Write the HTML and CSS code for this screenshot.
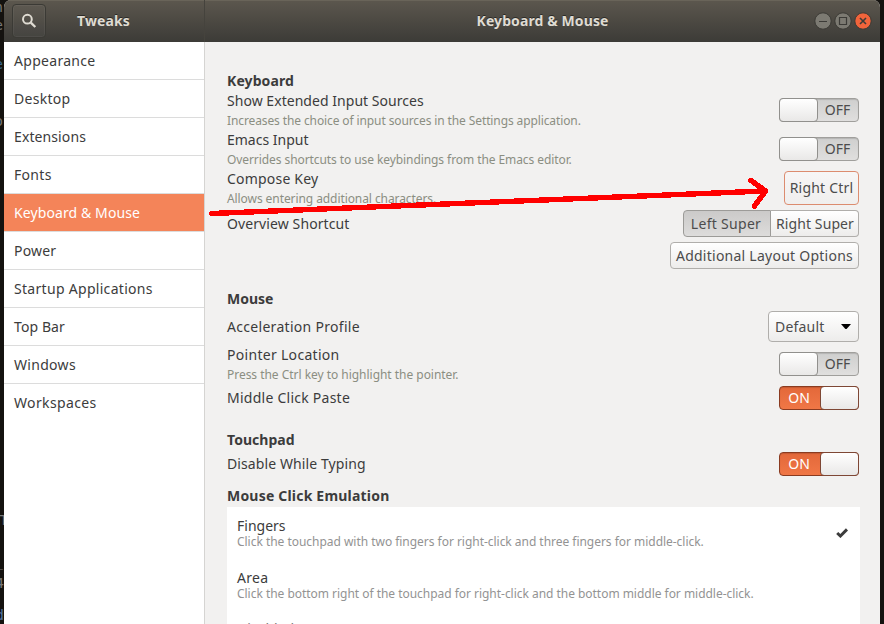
FILE: index.html
```html
<!DOCTYPE html>
<html lang="en">
<head>
<meta charset="utf-8">
<title>Tweaks</title>
<link rel="stylesheet" href="styles.css">
</head>
<body>
<div class="backdrop" aria-hidden="true">
  <span class="frag f1">n</span><span class="frag f2">e</span><span class="frag f3">e</span><span class="frag f4">o</span>
  <span class="frag f5">T</span><span class="frag f6">_</span><span class="frag f7">4</span><span class="frag f8">d</span>
</div>
<div class="window">
  <header class="titlebar">
    <div class="side-head">
      <button class="search" aria-label="Search"><svg width="16" height="16" viewBox="0 0 16 16"><circle cx="6.4" cy="6.2" r="4.4" fill="none" stroke="#dfdbd2" stroke-width="2"/><path d="M9.8 9.6 14.3 14" stroke="#dfdbd2" stroke-width="2.4"/></svg></button>
      <h1 class="app-name t1">Tweaks</h1>
    </div>
    <div class="main-head">
      <h1 class="page-name t1">Keyboard &amp; Mouse</h1>
      <div class="controls">
        <svg width="18" height="18" viewBox="0 0 18 18"><circle class="ctl" cx="9" cy="9" r="8.2"/><path class="glyph" d="M5 9.5h8"/></svg>
        <svg width="18" height="18" viewBox="0 0 18 18"><circle class="ctl" cx="9" cy="9" r="8.2"/><path class="glyph" d="M5.5 5.5h7v7h-7z"/></svg>
        <svg width="18" height="18" viewBox="0 0 18 18"><circle class="ctl close" cx="9" cy="9" r="8.2"/><path class="glyph x" d="M6 6l6 6M12 6l-6 6"/></svg>
      </div>
    </div>
  </header>
  <div class="body">
    <nav class="sidebar">
      <a class="item t3">Appearance</a>
      <a class="item t3">Desktop</a>
      <a class="item t1">Extensions</a>
      <a class="item t3">Fonts</a>
      <a class="item t1 selected">Keyboard &amp; Mouse</a>
      <a class="item t2">Power</a>
      <a class="item t3">Startup Applications</a>
      <a class="item t1">Top Bar</a>
      <a class="item t3">Windows</a>
      <a class="item t4">Workspaces</a>
    </nav>
    <main class="content">
      <h2 class="heading t1">Keyboard</h2>
      <div class="row tall"><div class="label"><p class="name t0">Show Extended Input Sources</p><p class="desc n3">Increases the choice of input sources in the Settings application.</p></div><div class="switch"><i class="knob"></i><span class="state">OFF</span></div></div>
      <div class="row tall"><div class="label"><p class="name">Emacs Input</p><p class="desc n2">Overrides shortcuts to use keybindings from the Emacs editor.</p></div><div class="switch"><i class="knob"></i><span class="state">OFF</span></div></div>
      <div class="row tall"><div class="label"><p class="name t2">Compose Key</p><p class="desc n2">Allows entering additional characters.</p></div><button class="button compose t2">Right Ctrl</button></div>
      <div class="row overview"><p class="name t1">Overview Shortcut</p><div class="segmented"><button class="button pressed t3">Left Super</button><button class="button last t1">Right Super</button></div></div>
      <div class="row options"><button class="button layout t25">Additional Layout Options</button></div>
      <h2 class="heading mouse">Mouse</h2>
      <div class="row accel"><p class="name t3">Acceleration Profile</p><button class="button combo"><span class="t2">Default</span><svg width="12" height="7" viewBox="0 0 12 7"><path d="M1 1h10L6.8 5.7q-.8.7-1.6 0z"/></svg></button></div>
      <div class="row tall pointer"><div class="label"><p class="name t3">Pointer Location</p><p class="desc n1">Press the Ctrl key to highlight the pointer.</p></div><div class="switch"><i class="knob"></i><span class="state">OFF</span></div></div>
      <div class="row short"><p class="name t25">Middle Click Paste</p><div class="switch on"><span class="state">ON</span><i class="knob"></i></div></div>
      <h2 class="heading touchpad t0">Touchpad</h2>
      <div class="row short"><p class="name t1">Disable While Typing</p><div class="switch on"><span class="state">ON</span><i class="knob"></i></div></div>
      <h2 class="heading emulation t2">Mouse Click Emulation</h2>
      <div class="list">
        <div class="choice"><div><p class="name">Fingers</p><p class="desc n1">Click the touchpad with two fingers for right-click and three fingers for middle-click.</p></div><svg class="check" width="12" height="10" viewBox="0 0 12 10"><path d="M1.2 5 4.4 8 11 1.4" fill="none" stroke="#3c3c3c" stroke-width="3"/></svg></div>
        <div class="choice"><div><p class="name t3">Area</p><p class="desc n1">Click the bottom right of the touchpad for right-click and the bottom middle for middle-click.</p></div></div>
        <div class="choice"><div><p class="name peek">Disabled</p></div></div>
      </div>
    </main>
  </div>
</div>
<svg class="arrow" width="884" height="624" viewBox="0 0 884 624"><path d="M212 213.5 765 191M751 180.5l14.5 10.5-11 15" fill="none" stroke="#f00" stroke-width="5.4" stroke-linecap="round" stroke-linejoin="round" shape-rendering="crispEdges"/></svg>
</body>
</html>
```
FILE: styles.css
```css
* { box-sizing: border-box; }
body, h1, h2, p { margin: 0; }
body {
  position: relative;
  width: 884px;
  height: 624px;
  overflow: hidden;
  padding: 0 4px;
  background: #14120f;
  color: #3c3c3c;
  font: 14px/20px "Noto Sans", "Open Sans", sans-serif;
}
button { font: inherit; color: inherit; margin: 0; padding: 0; }
.backdrop { position: absolute; left: 0; top: 0; width: 4px; height: 624px; overflow: hidden; color: #777; }
.frag { position: absolute; right: 1px; font: 14px/16px "DejaVu Sans Mono", monospace; }
.f1 { top: -1px; } .f2 { top: 17px; } .f3 { top: 56px; color: #39688b; } .f4 { top: 113px; }
.f5 { top: 512px; right: -4px; } .f6 { top: 553px; } .f7 { top: 575px; right: 0; } .f8 { top: 607px; right: 0; color: #5474a0; }
.window { height: 624px; display: flex; flex-direction: column; border-radius: 7px 7px 0 0; overflow: hidden; background: #f2f1f0; }
.titlebar {
  height: 42px;
  flex: none;
  display: flex;
  background: linear-gradient(#5c574e, #3c3b37);
  box-shadow: inset 0 1px #696459;
  color: #dfdbd2;
  text-shadow: 0 -1px #2b2a27;
}
.titlebar h1 { font-size: 14px; line-height: 42px; font-weight: 700; }
.side-head { width: 201px; display: flex; align-items: center; border-right: 1px solid #45433d; padding-left: 8px; }
.search { width: 34px; height: 34px; display: grid; place-items: center; background: #ffffff08; border: 1px solid #3b3a35; border-radius: 4px; box-shadow: inset 0 0 0 1px #ffffff0c; }
.app-name { margin-left: 31px; }
.main-head { flex: 1; display: grid; grid-template-columns: 1fr auto 1fr; align-items: center; }
.page-name { grid-column: 2; }
.controls { display: flex; gap: 2px; justify-content: flex-end; padding-right: 8px; }
.ctl { fill: #7c7a72; stroke: #3b3a35; }
.close { fill: #f1643b; }
.glyph { fill: none; stroke: #3c3b37; stroke-width: 1.2; }
.x { stroke-width: 1.6; }
.body { flex: 1; min-height: 0; display: flex; }
.sidebar { width: 201px; flex: none; background: #fff; border-right: 1px solid #d5d4d2; }
.item { display: block; height: 38px; padding-left: 10px; line-height: 37px; border-bottom: 1px solid #dcdcdc; }
.item:last-child { border: 0; }
.selected { background: #f48459; color: #fff; }
.content { flex: 1; min-width: 0; padding: 29px 21px 0 22px; }
.heading { font-size: 14px; line-height: 20px; font-weight: 700; }
.row { display: flex; align-items: center; justify-content: space-between; }
.tall { height: 39px; }
.tall .switch, .tall .button { margin-bottom: 2px; }
.name { white-space: nowrap; }
.desc { font-size: 12px; line-height: 19px; color: #8b8e82; white-space: nowrap; }
.switch { width: 80px; height: 24px; flex: none; display: flex; border: 1px solid #a09f9c; border-radius: 4px; background: linear-gradient(#cfcfce, #e0dfde); color: #4c4c4c; line-height: 22px; text-align: center; box-shadow: inset 0 1px 1px #0002; }
.state { flex: 1; }
.knob { width: 39px; height: 24px; margin: -1px; border: 1px solid #91908d; border-radius: 4px; background: linear-gradient(#fff, #e9e8e7); }
.on { background: linear-gradient(#e3683a, #f07746); border-color: #8a3b20; color: #fff; }
.on .state { padding-right: 3px; }
.on .knob { border-color: #7e4735; }
.button { height: 27px; border: 1px solid #b0aeab; border-radius: 4px; background: linear-gradient(#fff, #edeceb); color: #4c4c4c; text-align: center; white-space: nowrap; }
.button.compose { width: 75px; height: 34px; border-color: #dc8c6f; background: linear-gradient(#f7f6f6, #f0efee); }
.overview { height: 27px; margin-top: 2px; }
.segmented { display: flex; }
.pressed { width: 88px; padding-right: 2px; border-color: #9c9b98; border-radius: 4px 0 0 4px; background: linear-gradient(#cbcac9, #dddcdb); }
.last { width: 88px; padding-left: 1px; border-left: 0; border-radius: 0 4px 4px 0; }
.options { margin-top: 5px; justify-content: flex-end; }
.layout { width: 189px; }
.mouse { margin-top: 20px; }
.accel { height: 31px; margin-top: 2px; }
.combo { width: 91px; height: 31px; display: flex; align-items: center; justify-content: space-between; padding: 0 6px; }
.pointer { margin-top: 3px; }
.short { height: 24px; margin-top: 2px; }
.touchpad { margin-top: 20px; }
.emulation { margin-top: 10px; }
.list { margin: 1px -1px 0 0; height: 118px; overflow: hidden; background: #fff; padding: 10px 10px 0; }
.choice { height: 52px; display: flex; justify-content: space-between; }
.choice .name { line-height: 18px; }
.choice .desc { line-height: 14px; color: #939393; }
.choice .peek { line-height: 15px; color: #777; }
.check { margin: 11px 2px 0 0; }
.arrow { position: absolute; left: 0; top: 0; pointer-events: none; }

/* tracking steps */
.t0 { letter-spacing: .04px; }
.t1 { letter-spacing: .1px; }
.t2 { letter-spacing: .2px; }
.t25 { letter-spacing: .25px; }
.t3 { letter-spacing: .3px; }
.t4 { letter-spacing: .36px; }
.n1 { letter-spacing: -.03px; }
.n2 { letter-spacing: -.08px; }
.n3 { letter-spacing: -.11px; }
```
